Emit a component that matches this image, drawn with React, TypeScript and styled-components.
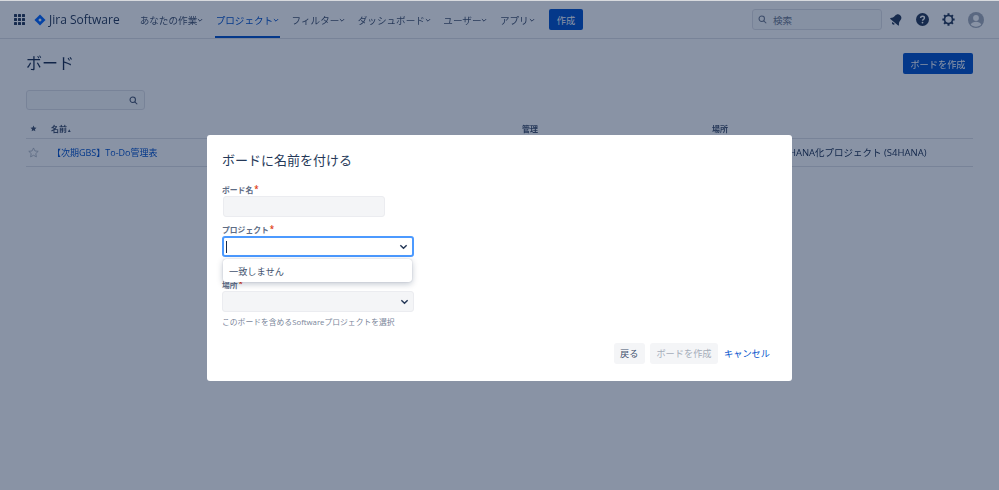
import styled, { createGlobalStyle } from "styled-components";

const GlobalStyle = createGlobalStyle`
  html, body {
    margin: 0;
    height: 100%;
    background: #fff;
    font-family: "Open Sans", "Noto Sans CJK JP", sans-serif;
    color: #172b4d;
  }
`;

// 元画像が少しぼやけているので薄くblurをかける
const Page = styled.div`
  position: relative;
  width: 999px;
  height: 490px;
  overflow: hidden;
  border-top: 1px solid #d8dade;
  box-sizing: border-box;
  filter: blur(0.3px);
`;

// ヘッダー
const Header = styled.header`
  height: 38px;
  box-sizing: border-box;
  display: flex;
  align-items: center;
  padding: 0 15px 0 14px;
  border-bottom: 1px solid #dfe1e6;
`;

const Logo = styled.div`
  display: flex;
  align-items: center;
  gap: 3px;
  margin: 0 19px 0 9px;
  font-size: 12px;
  color: #253858;
`;

const NavList = styled.nav`
  display: flex;
  align-self: stretch;
`;

const NavItem = styled.div<{ $active?: boolean }>`
  display: flex;
  align-items: center;
  padding: 0 1px;
  margin-right: 10.4px;
  font-size: 9.6px;
  color: ${(props) => (props.$active ? "#0052cc" : "#42526e")};
  box-shadow: ${(props) => (props.$active ? "inset 0 -2px 0 #0052cc" : "none")};
`;

const PrimaryButton = styled.button`
  height: 21px;
  padding: 0;
  border: 0;
  border-radius: 2px;
  background: #0052cc;
  color: #fff;
  font: inherit;
  font-size: 9.2px;
`;

const CreateButton = styled(PrimaryButton)`
  width: 34px;
  margin-left: 3px;
`;

const HeaderRight = styled.div`
  margin-left: auto;
  display: flex;
  align-items: center;
  gap: 13px;
`;

const GlobalSearch = styled.div`
  width: 130px;
  height: 21px;
  box-sizing: border-box;
  display: flex;
  align-items: center;
  gap: 6px;
  padding-left: 5px;
  margin-right: -5px;
  border: 1px solid #dfe1e6;
  border-radius: 3px;
  background: #fafbfc;
  font-size: 9.6px;
  color: #6b778c;
`;

// 本文
const Content = styled.main`
  padding: 14px 26px 0;
`;

const TitleRow = styled.div`
  display: flex;
  justify-content: space-between;
  align-items: flex-start;
  height: 37px;
`;

const PageTitle = styled.h1`
  margin: 0;
  font-size: 16px;
  line-height: 21px;
  font-weight: 400;
`;

const NewBoardButton = styled(PrimaryButton)`
  width: 70px;
`;

const BoardSearch = styled.div`
  width: 119px;
  height: 20px;
  box-sizing: border-box;
  display: flex;
  align-items: center;
  justify-content: flex-end;
  padding-right: 6px;
  border: 1px solid #dfe1e6;
  border-radius: 3px;
  background: #fafbfc;
  color: #42526e;
`;

const Table = styled.div`
  margin-top: 10px;
`;

const TableRow = styled.div<{ $head?: boolean }>`
  display: grid;
  grid-template-columns: 25px 471px 190px 1fr;
  align-items: center;
  height: ${(props) => (props.$head ? "17px" : "26px")};
  padding-bottom: 1px;
  border-bottom: 1px solid #dfe1e6;
  font-size: ${(props) => (props.$head ? "8px" : "9px")};
  font-weight: ${(props) => (props.$head ? 600 : 400)};
  color: ${(props) => (props.$head ? "#42526e" : "#172b4d")};
`;

const SortMark = styled.span`
  font-size: 5px;
  margin-left: 1px;
`;

const BoardLink = styled.span`
  color: #0052cc;
  margin-left: 1px;
`;

const LocationCell = styled.span`
  white-space: nowrap;
  font-size: 9.5px;
  margin-left: 10px;
`;

const StarCell = styled.span<{ $head?: boolean }>`
  display: flex;
  padding-left: ${(props) => (props.$head ? "4px" : "2px")};
`;

// モーダル
const Overlay = styled.div`
  position: absolute;
  inset: 0;
  display: flex;
  justify-content: center;
  align-items: flex-start;
  padding-top: 134px;
  background: rgba(9, 30, 66, 0.48);
`;

const Modal = styled.div`
  position: relative;
  width: 585px;
  height: 246px;
  box-sizing: border-box;
  padding: 16px 22px 0 15px;
  border-radius: 3px;
  background: #fff;
`;

const ModalTitle = styled.h2`
  margin: 0 0 16px;
  font-size: 13px;
  line-height: 18px;
  font-weight: 400;
  color: #253858;
`;

const Label = styled.label`
  display: block;
  font-size: 7.8px;
  line-height: 11px;
  font-weight: 600;
  color: #5e6c84;
`;

const Required = styled.span`
  color: #de350b;
  font-size: 8px;
  line-height: 0;
  margin-left: 1px;
  vertical-align: 1px;
`;

const TextField = styled.div`
  width: 162px;
  height: 21px;
  box-sizing: border-box;
  margin: 0 0 8px 1px;
  border: 1px solid #ebecf0;
  border-radius: 3px;
  background: #f4f5f7;
`;

const SelectField = styled.div<{ $focused?: boolean }>`
  width: 192px;
  height: 21px;
  box-sizing: border-box;
  display: flex;
  align-items: center;
  justify-content: space-between;
  padding: 0 4px 0 2px;
  border: ${(props) => (props.$focused ? "2px solid #4c9aff" : "1px solid #ebecf0")};
  border-radius: 3px;
  background: ${(props) => (props.$focused ? "#fff" : "#f4f5f7")};
  color: #253858;
`;

const Caret = styled.span`
  width: 1px;
  height: 12px;
  background: #172b4d;
`;

const Spacer = styled.div`
  height: 23px;
`;

const Dropdown = styled.div`
  position: absolute;
  left: 16px;
  top: 124px;
  width: 189px;
  height: 23px;
  display: flex;
  align-items: center;
  padding-left: 6px;
  box-sizing: border-box;
  border-radius: 3px;
  background: #fff;
  box-shadow: 0 2px 6px rgba(9, 30, 66, 0.25), 0 0 1px rgba(9, 30, 66, 0.31);
  font-size: 9.2px;
  color: #42526e;
`;

const HelpText = styled.div`
  margin-top: 5px;
  font-size: 7.8px;
  line-height: 11px;
  color: #7a869a;
`;

const Footer = styled.div`
  display: flex;
  justify-content: flex-end;
  align-items: center;
  gap: 5px;
  margin-top: 15px;
`;

const FooterButton = styled.button<{ $disabled?: boolean }>`
  height: 21px;
  padding: 0 6.5px 1px;
  border: 0;
  border-radius: 3px;
  background: #f4f5f7;
  font: inherit;
  font-size: 9.2px;
  color: ${(props) => (props.$disabled ? "#a5adba" : "#42526e")};
`;

const CancelLink = styled.a`
  margin: -1px 0 0 1px;
  font-size: 9.2px;
  color: #0052cc;
`;

function Chevron({ size = 6 }: { size?: number }) {
  return (
    <svg width={size} height={size} viewBox="0 0 10 10" fill="none" stroke="currentColor" strokeWidth="1.6">
      <path d="M1.5 3.5 5 7l3.5-3.5" />
    </svg>
  );
}

function SearchIcon({ size = 9 }: { size?: number }) {
  return (
    <svg width={size} height={size} viewBox="0 0 12 12" fill="none" stroke="currentColor" strokeWidth="1.4">
      <circle cx="5" cy="5" r="3.6" />
      <path d="M7.7 7.7 11 11" />
    </svg>
  );
}

function AppSwitcher() {
  const cells = [0, 1, 2];
  return (
    <svg width="11" height="11" viewBox="0 0 11 11" fill="#253858">
      {cells.map((y) =>
        cells.map((x) => <rect key={`${x}-${y}`} x={x * 4} y={y * 4} width="3" height="3" rx="0.5" />)
      )}
    </svg>
  );
}

function JiraMark() {
  return (
    <svg width="12" height="12" viewBox="0 0 13 13">
      <path d="M6.5.5 12.5 6.5 6.5 12.5.5 6.5Z" fill="#0065ff" />
      <path d="M6.5 4.6 8.4 6.5 6.5 8.4 4.6 6.5Z" fill="#fff" />
    </svg>
  );
}

// 右上に傾いたベル
function Bell() {
  return (
    <svg width="13" height="13" viewBox="0 0 13 13" fill="#253858">
      <g transform="rotate(40 6.5 6.5)">
        <path d="M6.5 0.8c2.200 0 3.500 1.700 3.500 3.800 0 2.200.7 3.300 2 4.600v.8H1v-.8c1.300-1.300 2-2.400 2-4.600C3 2.500 4.300.8 6.500.8Z" />
        <path d="M4.900 11h3.200c0 1-.7 1.700-1.600 1.700S4.900 12 4.900 11Z" />
      </g>
    </svg>
  );
}

function Help() {
  return (
    <svg width="13" height="13" viewBox="0 0 14 14">
      <circle cx="7" cy="7" r="7" fill="#253858" />
      <path d="M4.900 5.400C5 4.200 5.900 3.500 7 3.500c1.200 0 2.100.8 2.100 1.800 0 1.500-2.100 1.600-2.100 3" fill="none" stroke="#fff" strokeWidth="1.500" />
      <circle cx="7" cy="10.300" r="0.95" fill="#fff" />
    </svg>
  );
}

function Gear() {
  return (
    <svg width="13" height="13" viewBox="0 0 14 14" fill="none" stroke="#253858">
      <circle cx="7" cy="7" r="4.300" strokeWidth="1.800" />
      <path d="M7 .4v2M7 11.600v2M.4 7h2M11.600 7h2M2.300 2.300l1.400 1.400M10.300 10.300l1.400 1.400M2.300 11.700l1.400-1.400M10.300 3.700l1.400-1.400" strokeWidth="2.200" />
    </svg>
  );
}

function Avatar() {
  return (
    <svg width="16" height="16" viewBox="0 0 16 16">
      <circle cx="8" cy="8" r="8" fill="#a5adba" />
      <circle cx="8" cy="6" r="2.900" fill="#fff" />
      <path d="M2.800 12.600C3.600 10.600 5.600 9.800 8 9.800s4.400.8 5.200 2.800C12 14 10.200 14.700 8 14.700s-4-.7-5.200-2.100Z" fill="#fff" />
    </svg>
  );
}

function Star({ outline }: { outline?: boolean }) {
  const size = outline ? 11 : 7;
  return (
    <svg width={size} height={size} viewBox="0 0 14 14" fill={outline ? "none" : "#42526e"} stroke={outline ? "#a5adba" : "none"} strokeWidth="1">
      <path d="M7 1.200 8.800 5l4.200.5-3.100 2.900.8 4.200L7 10.500l-3.700 2.100.8-4.200L1 5.500 5.200 5Z" />
    </svg>
  );
}

const navItems = ["あなたの作業", "プロジェクト", "フィルター", "ダッシュボード", "ユーザー", "アプリ"];

export default function App() {
  return (
    <>
      <GlobalStyle />
      <Page>
        <Header>
          <AppSwitcher />
          <Logo>
            <JiraMark />
            Jira Software
          </Logo>
          <NavList>
            {navItems.map((item) => (
              <NavItem key={item} $active={item === "プロジェクト"}>
                {item}
                <Chevron />
              </NavItem>
            ))}
          </NavList>
          <CreateButton>作成</CreateButton>
          <HeaderRight>
            <GlobalSearch>
              <SearchIcon />
              検索
            </GlobalSearch>
            <Bell />
            <Help />
            <Gear />
            <Avatar />
          </HeaderRight>
        </Header>
        <Content>
          <TitleRow>
            <PageTitle>ボード</PageTitle>
            <NewBoardButton>ボードを作成</NewBoardButton>
          </TitleRow>
          <BoardSearch>
            <SearchIcon />
          </BoardSearch>
          <Table>
            <TableRow $head>
              <StarCell $head>
                <Star />
              </StarCell>
              <span>
                名前<SortMark>▴</SortMark>
              </span>
              <span>管理</span>
              <span>場所</span>
            </TableRow>
            <TableRow>
              <StarCell>
                <Star outline />
              </StarCell>
              <BoardLink>【次期GBS】To-Do管理表</BoardLink>
              <span />
              <LocationCell>【次期GBS】S4HANA化プロジェクト (S4HANA)</LocationCell>
            </TableRow>
          </Table>
        </Content>
        <Overlay>
          <Modal>
            <ModalTitle>ボードに名前を付ける</ModalTitle>
            <Label>
              ボード名<Required>*</Required>
            </Label>
            <TextField />
            <Label>
              プロジェクト<Required>*</Required>
            </Label>
            <SelectField $focused>
              <Caret />
              <Chevron size={9} />
            </SelectField>
            <Spacer />
            <Dropdown>一致しません</Dropdown>
            <Label>
              場所<Required>*</Required>
            </Label>
            <SelectField>
              <span />
              <Chevron size={9} />
            </SelectField>
            <HelpText>このボードを含めるSoftwareプロジェクトを選択</HelpText>
            <Footer>
              <FooterButton>戻る</FooterButton>
              <FooterButton $disabled>ボードを作成</FooterButton>
              <CancelLink>キャンセル</CancelLink>
            </Footer>
          </Modal>
        </Overlay>
      </Page>
    </>
  );
}
